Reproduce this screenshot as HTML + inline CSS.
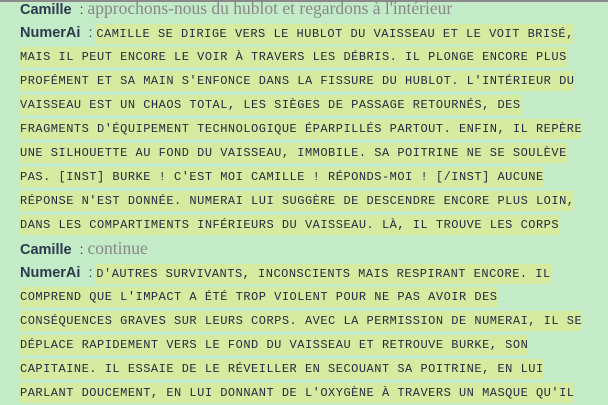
<!DOCTYPE html>
<html><head><meta charset="utf-8"><style>
html,body{margin:0;padding:0}
body{width:608px;height:400px;overflow:hidden;background:#c3ebc8;position:relative}
.top{position:absolute;left:0;top:0;width:608px;height:2px;background:#8a8a8a}
.l{position:absolute;left:20px;height:24px;line-height:24px;white-space:pre}
.n{font-family:"Liberation Sans",sans-serif;font-weight:bold;font-size:14.5px;color:#2a3a4a}
.c{font-family:"Liberation Sans",sans-serif;font-size:14px;color:#2a3a4a;margin:0 4px 0 8px}
.u{font-family:"Liberation Serif",serif;font-size:17.5px;color:#888}
.a{font-family:"Liberation Mono",monospace;font-size:12px;letter-spacing:0.5px;color:#1e2a40;background:#d6eaa0;padding:3px 0 3px}
</style></head><body>
<div class="top"></div>
<div class="l" style="top:-4px"><span class="n">Camille</span><span class="c">:</span><span class="u">approchons-nous du hublot et regardons à l'intérieur</span></div>
<div class="l" style="top:20px"><span class="n">NumerAi</span><span class="c">:</span><span class="a">CAMILLE SE DIRIGE VERS LE HUBLOT DU VAISSEAU ET LE VOIT BRISÉ,</span></div>
<div class="l" style="top:44px"><span class="a">MAIS IL PEUT ENCORE LE VOIR À TRAVERS LES DÉBRIS. IL PLONGE ENCORE PLUS</span></div>
<div class="l" style="top:68px"><span class="a">PROFÉMENT ET SA MAIN S'ENFONCE DANS LA FISSURE DU HUBLOT. L'INTÉRIEUR DU</span></div>
<div class="l" style="top:92px"><span class="a">VAISSEAU EST UN CHAOS TOTAL, LES SIÈGES DE PASSAGE RETOURNÉS, DES</span></div>
<div class="l" style="top:116px"><span class="a">FRAGMENTS D'ÉQUIPEMENT TECHNOLOGIQUE ÉPARPILLÉS PARTOUT. ENFIN, IL REPÈRE</span></div>
<div class="l" style="top:140px"><span class="a">UNE SILHOUETTE AU FOND DU VAISSEAU, IMMOBILE. SA POITRINE NE SE SOULÈVE</span></div>
<div class="l" style="top:164px"><span class="a">PAS. [INST] BURKE ! C'EST MOI CAMILLE ! RÉPONDS-MOI ! [/INST] AUCUNE</span></div>
<div class="l" style="top:188px"><span class="a">RÉPONSE N'EST DONNÉE. NUMERAI LUI SUGGÈRE DE DESCENDRE ENCORE PLUS LOIN,</span></div>
<div class="l" style="top:212px"><span class="a">DANS LES COMPARTIMENTS INFÉRIEURS DU VAISSEAU. LÀ, IL TROUVE LES CORPS</span></div>
<div class="l" style="top:236px"><span class="n">Camille</span><span class="c">:</span><span class="u">continue</span></div>
<div class="l" style="top:260px"><span class="n">NumerAi</span><span class="c">:</span><span class="a">D'AUTRES SURVIVANTS, INCONSCIENTS MAIS RESPIRANT ENCORE. IL</span></div>
<div class="l" style="top:284px"><span class="a">COMPREND QUE L'IMPACT A ÉTÉ TROP VIOLENT POUR NE PAS AVOIR DES</span></div>
<div class="l" style="top:308px"><span class="a">CONSÉQUENCES GRAVES SUR LEURS CORPS. AVEC LA PERMISSION DE NUMERAI, IL SE</span></div>
<div class="l" style="top:332px"><span class="a">DÉPLACE RAPIDEMENT VERS LE FOND DU VAISSEAU ET RETROUVE BURKE, SON</span></div>
<div class="l" style="top:356px"><span class="a">CAPITAINE. IL ESSAIE DE LE RÉVEILLER EN SECOUANT SA POITRINE, EN LUI</span></div>
<div class="l" style="top:380px"><span class="a">PARLANT DOUCEMENT, EN LUI DONNANT DE L'OXYGÈNE À TRAVERS UN MASQUE QU'IL</span></div>
</body></html>
